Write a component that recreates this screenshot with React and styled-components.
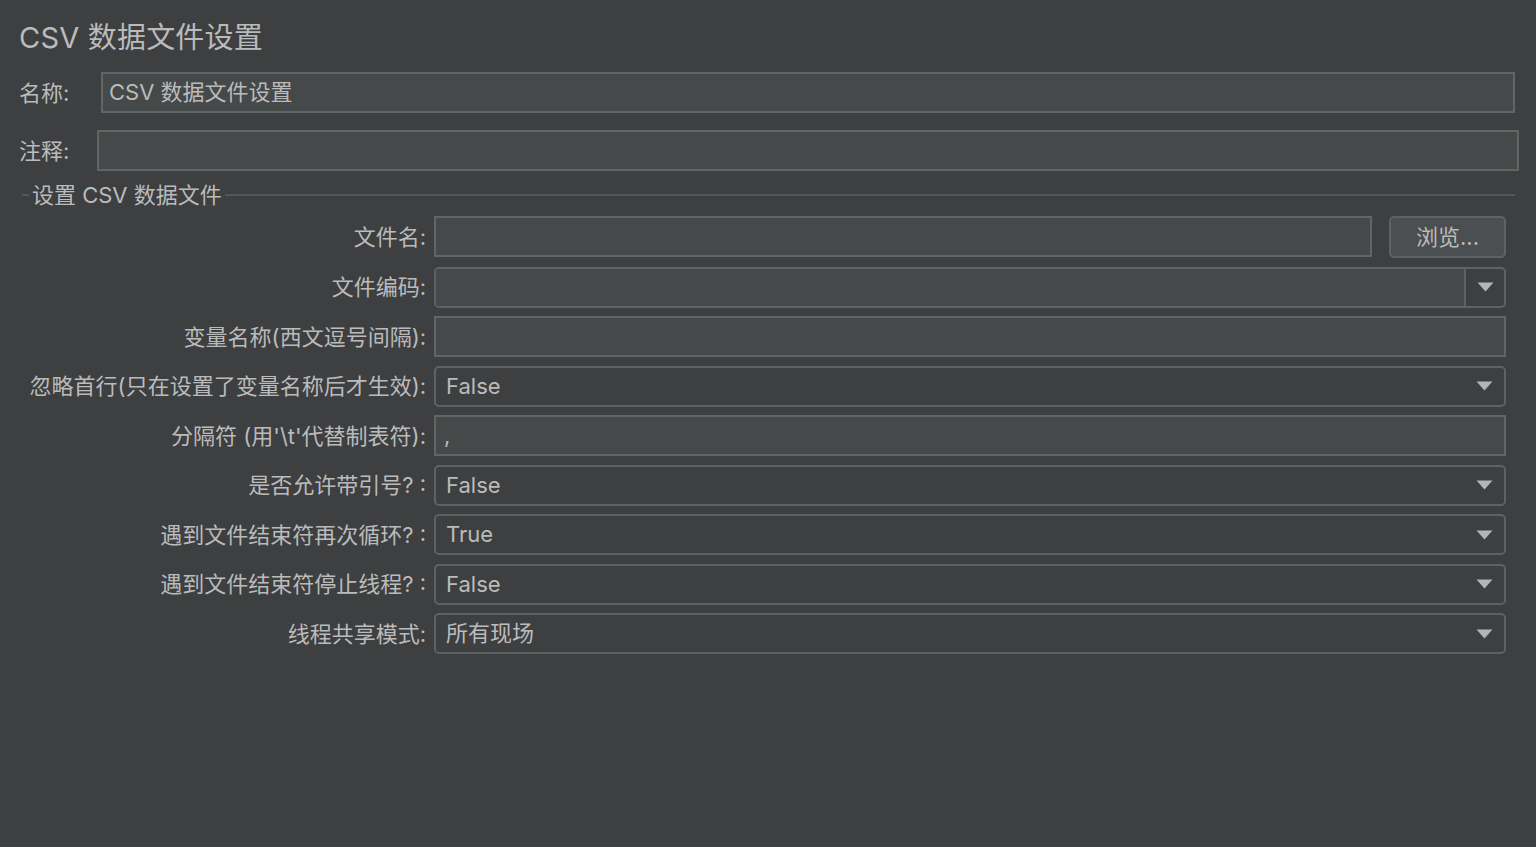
import React from "react";
import styled, { createGlobalStyle } from "styled-components";

const Global = createGlobalStyle`
  html, body { margin: 0; padding: 0; background: #3d3f41; }
  body { font-family: Inter, "Noto Sans CJK SC", sans-serif; color: #bbbbbb; }
  * { box-sizing: border-box; }
`;

const Page = styled.div`
  width: 1536px;
  height: 847px;
  background: #3d3f41;
  padding: 20px 0 0 19px;
  display: flex;
  flex-direction: column;
`;

const Title = styled.h1`
  margin: 0;
  font-weight: 400;
  font-size: 29px;
  line-height: 36px;
  color: #bbbbbb;
  letter-spacing: 0.2px;
`;

const TopRow = styled.div`
  display: flex;
  align-items: center;
  height: 41px;
  margin-top: ${(p) => p.$mt}px;
`;

const TopLabel = styled.label`
  width: ${(p) => p.$w}px;
  font-size: 22px;
  line-height: 28px;
  flex: none;
`;

const TextInput = styled.div`
  height: 41px;
  background: #45494a;
  border: 2px solid #646464;
  font-size: 22px;
  line-height: 37px;
  padding-left: ${(p) => p.$pl ?? 6}px;
  color: #bbbbbb;
  width: ${(p) => (p.$w ? `${p.$w}px` : "auto")};
  flex: ${(p) => (p.$w ? "none" : "1")};
  white-space: nowrap;
  overflow: hidden;
`;

const Fieldset = styled.section`
  margin: 10px 0 0 3px;
  width: 1493px;
`;

const Legend = styled.div`
  display: flex;
  align-items: center;
  height: 28px;
  font-size: 22px;
  line-height: 28px;
  &::before {
    content: "";
    width: 7px;
    height: 2px;
    background: #535557;
    margin-right: 3px;
  }
  &::after {
    content: "";
    flex: 1;
    height: 2px;
    background: #535557;
    margin-left: 3px;
  }
`;

const Grid = styled.div`
  display: grid;
  grid-template-columns: 401px 1072px;
  column-gap: 8px;
  row-gap: 8.5px;
  padding-left: 3px;
  margin-top: 7px;
`;

const RowLabel = styled.label`
  font-size: 22px;
  line-height: 28px;
  text-align: right;
  white-space: nowrap;
  align-self: center;
`;

const FieldRow = styled.div`
  display: flex;
  gap: 17px;
  height: ${(p) => p.$h || 41}px;
`;

const Button = styled.div`
  width: 117px;
  height: 42px;
  border-radius: 5px;
  border: 2px solid #5f6163;
  background: #4b4f51;
  font-size: 22px;
  line-height: 38px;
  text-align: center;
  color: #bbbbbb;
  flex: none;
`;

const Combo = styled.div`
  flex: 1;
  height: 41px;
  border: 2px solid #5f6163;
  border-radius: 5px;
  background: #3d3f41;
  display: flex;
  align-items: center;
  font-size: 22px;
  padding-left: 10px;
  color: #bbbbbb;
`;

const ComboText = styled.span`
  flex: 1;
  line-height: 37px;
`;

const ArrowBox = styled.div`
  width: 40px;
  height: 100%;
  display: flex;
  align-items: center;
  justify-content: center;
  flex: none;
  border-left: ${(p) => (p.$sep ? "2px solid #5f6163" : "none")};
`;

const EditCombo = styled(Combo)`
  padding-left: 0;
  overflow: hidden;
`;

const EditInner = styled.div`
  flex: 1;
  height: 100%;
  background: #45494a;
`;

const Arrow = () => (
  <svg width="17" height="10" viewBox="0 0 17 10">
    <path d="M0.5 0.5 H16.5 L8.5 9.5 Z" fill="#b3b5b7" />
  </svg>
);

const Select = ({ value }) => (
  <Combo>
    <ComboText>{value}</ComboText>
    <ArrowBox>
      <Arrow />
    </ArrowBox>
  </Combo>
);

export default function App() {
  return (
    <Page>
      <Global />
      <Title>CSV 数据文件设置</Title>
      <TopRow $mt={16}>
        <TopLabel $w={82}>名称:</TopLabel>
        <TextInput $w={1414}>CSV 数据文件设置</TextInput>
      </TopRow>
      <TopRow $mt={17}>
        <TopLabel $w={78}>注释:</TopLabel>
        <TextInput $w={1422} />
      </TopRow>
      <Fieldset>
        <Legend>设置 CSV 数据文件</Legend>
        <Grid>
          <RowLabel>文件名:</RowLabel>
          <FieldRow $h={42}>
            <TextInput />
            <Button>浏览...</Button>
          </FieldRow>

          <RowLabel>文件编码:</RowLabel>
          <EditCombo>
            <EditInner />
            <ArrowBox $sep>
              <Arrow />
            </ArrowBox>
          </EditCombo>

          <RowLabel>变量名称(西文逗号间隔):</RowLabel>
          <TextInput />

          <RowLabel>忽略首行(只在设置了变量名称后才生效):</RowLabel>
          <Select value="False" />

          <RowLabel>分隔符 (用'\t'代替制表符):</RowLabel>
          <TextInput $pl={8}>,</TextInput>

          <RowLabel>是否允许带引号? :</RowLabel>
          <Select value="False" />

          <RowLabel>遇到文件结束符再次循环? :</RowLabel>
          <Select value="True" />

          <RowLabel>遇到文件结束符停止线程? :</RowLabel>
          <Select value="False" />

          <RowLabel>线程共享模式:</RowLabel>
          <Select value="所有现场" />
        </Grid>
      </Fieldset>
    </Page>
  );
}
